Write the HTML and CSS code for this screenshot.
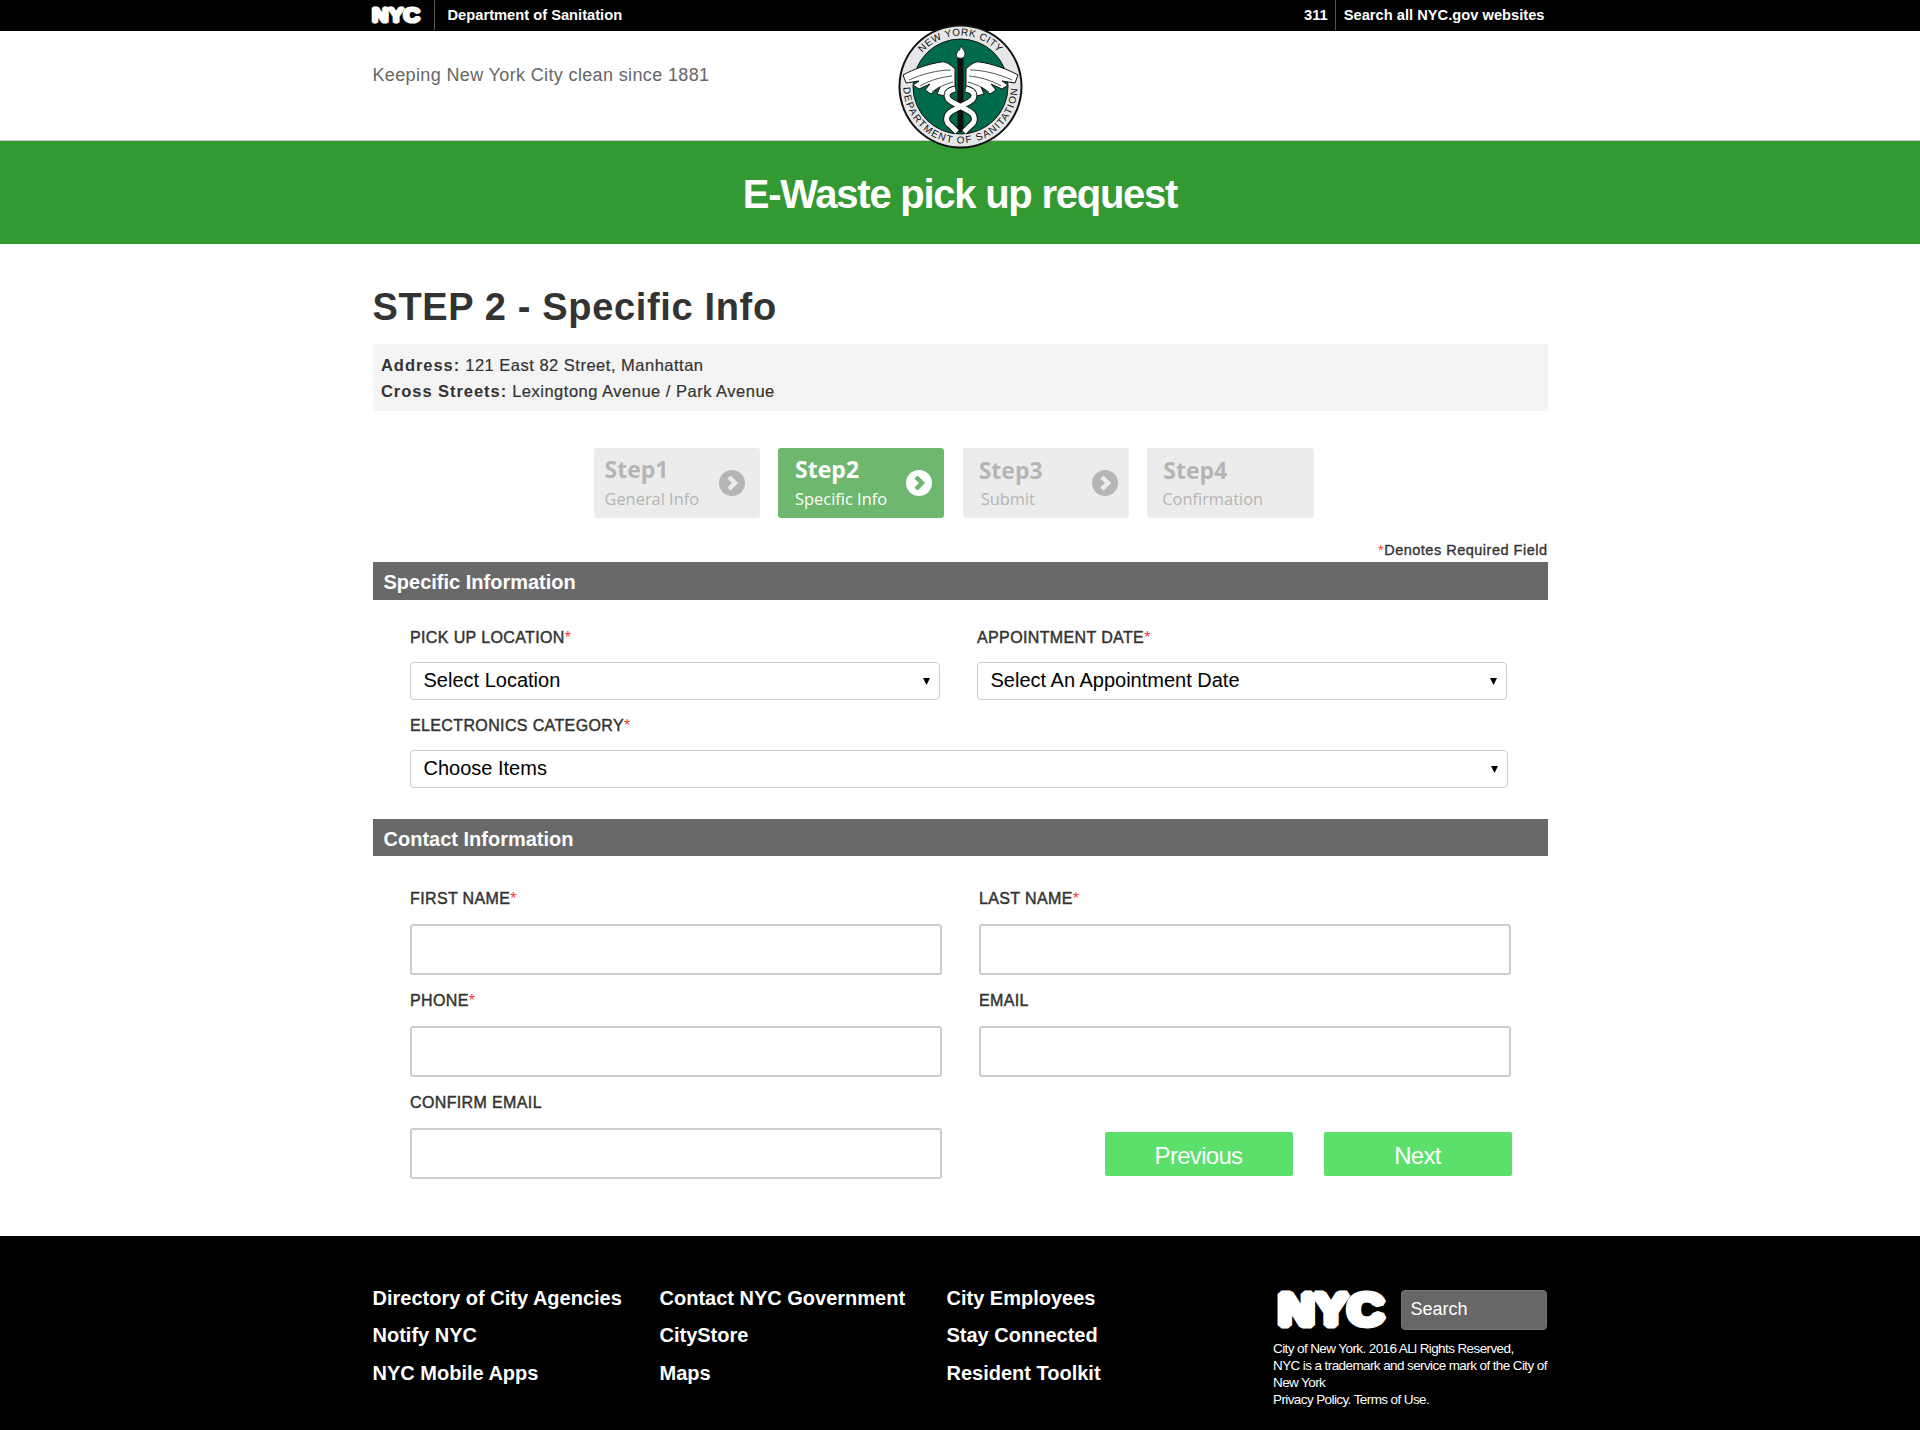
FILE: index.html
```html
<!DOCTYPE html>
<html lang="en">
<head>
<meta charset="utf-8">
<title>E-Waste pick up request</title>
<link rel="stylesheet" href="styles.css">
</head>
<body>
<div class="topbar">
  <div class="wrap topbar-in">
    <svg class="logo-top" viewBox="0 0 52 20" aria-label="NYC"><text x="2" y="17" textLength="48" lengthAdjust="spacingAndGlyphs" class="logo-text">NYC</text></svg>
    <span class="dept">Department of Sanitation</span>
    <span class="t311">311</span>
    <span class="search-all">Search all NYC.gov websites</span>
  </div>
</div>
<header class="head">
  <div class="wrap"><p class="tagline">Keeping New York City clean since 1881</p></div>
  <svg class="seal" viewBox="0 0 125 125" aria-label="New York City Department of Sanitation seal">
    <defs>
      <path id="arcTop" d="M11.500 62.500a51 51 0 0 1 102 0"/>
      <path id="arcBot" d="M5.500 62.500a57 57 0 0 0 114 0"/>
      <g id="wingL">
        <path class="wing-shape" d="M57 45 C52 40 47 37 43 38 C30 40 16 45 5 51 L8 59 L21 57 L15 61 L21 65 L32 60 L27 66 L33 70 L42 63 L39 70 L46 72 L51 66 L57 64Z"/>
        <path class="feather" d="M53 46 C40 46 24 50 11 56M54 52 C44 53 32 56 22 62M55 58 C48 60 40 63 34 68"/>
      </g>
    </defs>
    <circle cx="62.500" cy="62.500" r="62" fill="#111"/>
    <circle cx="62.500" cy="62.500" r="60" fill="#e6e7e8"/>
    <circle cx="62.500" cy="62.500" r="47.500" fill="#006b4a" stroke="#111" stroke-width="1"/>
    <text class="seal-text seal-top"><textPath href="#arcTop" startOffset="50%" text-anchor="middle">NEW YORK CITY</textPath></text>
    <text class="seal-text seal-bot"><textPath href="#arcBot" startOffset="50%" text-anchor="middle">DEPARTMENT OF SANITATION</textPath></text>
    <use href="#wingL"/>
    <use href="#wingL" transform="matrix(-1 0 0 1 125 0)"/>
    <rect x="59.500" y="33" width="6" height="75" fill="#111"/>
    <path class="flame" d="M62.500 22 C66 26 68 29 66.500 32 C66 35 59 35 58.500 32 C57.500 30 60 28 60.500 26 C61.500 27 62 26 62.500 22Z"/>
    <path class="snake-o" d="M57 65 C47 67 47 74 54 78 L71 87 C78 91 78 98 72 102 L66 108 M68 65 C78 67 78 74 71 78 L54 87 C47 91 47 98 53 102 L59 108"/>
    <path class="snake-i" d="M57 65 C47 67 47 74 54 78 L71 87 C78 91 78 98 72 102 L66 108 M68 65 C78 67 78 74 71 78 L54 87 C47 91 47 98 53 102 L59 108"/>
  </svg>
</header>
<div class="banner"><h1 class="banner-title">E-Waste pick up request</h1></div>

<main class="wrap main">
  <h2 class="step-title">STEP 2 - Specific Info</h2>
  <div class="address">
    <div><b>Address:</b> 121 East 82 Street, Manhattan</div>
    <div><b>Cross Streets:</b> Lexingtong Avenue / Park Avenue</div>
  </div>

  <div class="steps">
    <div class="step">
      <div class="step-text"><div class="step-num">Step1</div><div class="step-sub">General Info</div></div>
      <svg class="chev" viewBox="0 0 26 26"><circle cx="13" cy="13" r="13"/><path d="M10 7l6 6-6 6" /></svg>
    </div>
    <div class="step step-on">
      <div class="step-text"><div class="step-num">Step2</div><div class="step-sub">Specific Info</div></div>
      <svg class="chev" viewBox="0 0 26 26"><circle cx="13" cy="13" r="13"/><path d="M10 7l6 6-6 6" /></svg>
    </div>
    <div class="step step-3">
      <div class="step-text step-text-3"><div class="step-num">Step3</div><div class="step-sub step-sub-3">Submit</div></div>
      <svg class="chev" viewBox="0 0 26 26"><circle cx="13" cy="13" r="13"/><path d="M10 7l6 6-6 6" /></svg>
    </div>
    <div class="step">
      <div class="step-text step-text-4"><div class="step-num">Step4</div><div class="step-sub step-sub-4">Confirmation</div></div>
    </div>
  </div>

  <p class="required"><span class="req">*</span>Denotes Required Field</p>

  <h3 class="section">Specific Information</h3>
  <div class="form-a">
    <div class="field">
      <label class="lab">PICK UP LOCATION<span class="req">*</span></label>
      <select class="sel"><option>Select Location</option></select>
    </div>
    <div class="field">
      <label class="lab">APPOINTMENT DATE<span class="req">*</span></label>
      <select class="sel"><option>Select An Appointment Date</option></select>
    </div>
    <div class="field field-wide">
      <label class="lab">ELECTRONICS CATEGORY<span class="req">*</span></label>
      <select class="sel"><option>Choose Items</option></select>
    </div>
  </div>

  <h3 class="section section-2">Contact Information</h3>
  <div class="form-b">
    <div class="field"><label class="lab">FIRST NAME<span class="req">*</span></label><input class="inp" type="text"></div>
    <div class="field"><label class="lab">LAST NAME<span class="req">*</span></label><input class="inp" type="text"></div>
    <div class="field"><label class="lab">PHONE<span class="req">*</span></label><input class="inp" type="text"></div>
    <div class="field"><label class="lab">EMAIL</label><input class="inp" type="text"></div>
    <div class="field"><label class="lab">CONFIRM EMAIL</label><input class="inp" type="text"></div>
    <div class="buttons">
      <button class="btn" type="button">Previous</button>
      <button class="btn" type="button">Next</button>
    </div>
  </div>
</main>

<footer class="foot">
  <div class="wrap foot-in">
    <nav class="foot-links">
      <a>Directory of City Agencies</a><a>Contact NYC Government</a><a>City Employees</a>
      <a>Notify NYC</a><a>CityStore</a><a>Stay Connected</a>
      <a>NYC Mobile Apps</a><a>Maps</a><a>Resident Toolkit</a>
    </nav>
    <div class="foot-right">
      <div class="foot-top">
        <svg class="logo-foot" viewBox="0 0 52 20" aria-label="NYC"><text x="2" y="17" textLength="48" lengthAdjust="spacingAndGlyphs" class="logo-text">NYC</text></svg>
        <div class="foot-search"><span>Search</span></div>
      </div>
      <p class="legal">City of New York. 2016 ALl Rights Reserved,<br>NYC is a trademark and service mark of the City of New York<br>Privacy Policy. Terms of Use.</p>
    </div>
  </div>
</footer>
</body>
</html>
```
FILE: styles.css
```css
* { box-sizing: border-box; }
html, body { margin: 0; padding: 0; }
body { font-family: "Liberation Sans", Arial, sans-serif; color: #333; background: #fff; }
.wrap { width: 1175px; margin: 0 auto; }

.topbar { background: #000; height: 31px; color: #fff; }
.topbar-in { display: flex; align-items: stretch; height: 30px; font-weight: 700; font-size: 14.700px; line-height: 30px; }
.logo-top { width: 52px; height: 20px; margin: 5px 0 0 -3px; overflow: visible; }
.logo-text { font-family: "Liberation Sans", sans-serif; font-weight: 700; font-size: 20px; fill: #fff; stroke: #fff; stroke-width: 3.200px; stroke-linejoin: bevel; }
.dept { margin-left: 12px; border-left: 1px solid #555; padding-left: 13px; }
.t311 { margin-left: auto; padding-right: 7px; }
.search-all { border-left: 1px solid #555; padding-left: 8px; padding-right: 3px; }

.head { height: 110px; border-bottom: 1px solid #ccc; position: relative; }
.tagline { margin: 0; padding-top: 33px; font-size: 18px; line-height: 22px; color: #666; letter-spacing: .36px; }
.seal { position: absolute; left: 898px; top: -7px; width: 125px; height: 125px; z-index: 2; }
.seal-text { font-family: "Liberation Sans", sans-serif; font-size: 10px; fill: #111; }
.seal-top { letter-spacing: .5px; }
.seal-bot { letter-spacing: 1.300px; }
.wing-shape { fill: #fff; stroke: #111; stroke-width: 1; }
.feather { fill: none; stroke: #111; stroke-width: .7; }
.flame { fill: #fff; stroke: #111; stroke-width: .8; }
.snake-o { fill: none; stroke: #111; stroke-width: 7; }
.snake-i { fill: none; stroke: #fff; stroke-width: 5; }

.banner { background: #339933; height: 103px; display: flex; align-items: center; justify-content: center; padding-top: 4px; }
.banner-title { margin: 0; color: #fff; font-size: 40px; font-weight: 700; letter-spacing: -1.250px; }

.main { display: block; }
.step-title { margin: 0; padding-top: 40px; font-size: 38px; line-height: 46px; font-weight: 700; color: #333; letter-spacing: .65px; }
.address { margin-top: 14px; background: #f4f4f4; height: 67px; padding: 8px 8.500px; font-size: 16.500px; line-height: 26px; letter-spacing: .5px; -webkit-text-stroke: .2px #333; }
.address b { letter-spacing: .95px; -webkit-text-stroke: 0; }
.steps { display: flex; gap: 18.300px; margin: 37px 0 0 221px; }
.step { width: 166.300px; height: 70px; background: #ececec; border-radius: 3px; display: flex; align-items: center; justify-content: space-between; padding: 0 15px 0 11px; color: #b5b5b5; font-family: "Open Sans", sans-serif; }
.step-on { background: #6eb76e; color: #fff; padding: 0 12px 0 17px; }
.step-3 { padding-right: 11px; }
.step-text { position: relative; top: -1px; }
.step-num { font-size: 23px; line-height: 30px; font-weight: 700; }
.step-sub { font-size: 16.400px; line-height: 22px; margin-top: 4px; }
.step-text-3 { padding-left: 5px; }
.step-text-4 { padding-left: 5px; }
.step-sub-3 { padding-left: 2px; margin-top: 3px; }
.step-sub-4 { margin-top: 3px; margin-left: -1px; }
.chev { width: 26px; height: 26px; flex: none; }
.chev circle { fill: #b5b5b5; }
.chev path { fill: none; stroke: #ececec; stroke-width: 4.500; }
.step-on .chev circle { fill: #fff; }
.step-on .chev path { stroke: #6eb76e; }

.required { margin: 24px 0 0; text-align: right; font-size: 14.500px; line-height: 16px; font-weight: 400; color: #333; -webkit-text-stroke: .35px #333; letter-spacing: .5px; }
.req { color: #f33; font-weight: 400; -webkit-text-stroke: 0; }
.section { margin: 4px 0 0; background: #696969; color: #fff; height: 38px; padding-left: 11px; font-size: 20px; line-height: 40px; font-weight: 700; }
.section-2 { margin-top: 31px; height: 37px; line-height: 40px; }
.form-a { display: grid; grid-template-columns: 530px 530px; column-gap: 37px; padding: 27px 0 0 37px; }
.field { display: flex; flex-direction: column; }
.field-wide { grid-column: 1 / 3; margin-right: -1px; }
.lab { font-size: 16px; line-height: 18px; color: #333; font-weight: 400; -webkit-text-stroke: .45px #333; height: 35px; letter-spacing: .37px; padding: 2px 0 0 .5px; }
.sel { height: 38px; font-family: "Liberation Sans", sans-serif; font-size: 20px; color: #000; border: 1px solid #ccc; border-radius: 4px; padding: 0 13px 3px; margin-bottom: 15px; appearance: none; background: #fff url("data:image/svg+xml,%3Csvg xmlns='http://www.w3.org/2000/svg' width='7' height='7'%3E%3Cpath d='M0 0h7L3.500 7z'/%3E%3C/svg%3E") no-repeat right 9px center; }
.form-a .field-wide .sel { margin-bottom: 0; }

.form-b { display: grid; grid-template-columns: 532px 532px; column-gap: 37px; row-gap: 16px; padding: 33px 0 0 37px; }
.form-b .lab { height: 35px; padding-top: 1px; }
.inp { height: 51px; background: #fff; border: 2px solid #ccc; border-radius: 3px; }
.buttons { display: flex; gap: 31px; justify-content: flex-end; align-items: flex-end; margin-right: -1px; padding-bottom: 3px; }
.btn { width: 188px; height: 44px; background: #5ce06c; color: #fff; border: 0; border-radius: 2px; font-family: "Liberation Sans", sans-serif; font-size: 24px; letter-spacing: -.7px; padding: 3px 0 0; }

.foot { margin-top: 57px; background: #000; color: #fff; height: 195px; }
.foot-in { display: flex; padding-top: 46px; }
.foot-links { width: 900px; display: grid; grid-template-columns: 287px 287px 287px; grid-auto-rows: 37.400px; font-size: 20px; font-weight: 700; line-height: 32px; align-content: start; }
.foot-right { width: 275px; padding-top: 8px; }
.foot-top { display: flex; align-items: flex-start; gap: 8px; }
.logo-foot { width: 124px; height: 44px; margin: -2px 0 0 -4px; flex: none; overflow: visible; }
.foot-search { width: 146px; height: 40px; background: #666; border: 1px solid #777; border-radius: 4px; padding-left: 9px; font-size: 18px; line-height: 36px; }
.legal { margin: 8px 0 0 .5px; font-size: 13.500px; line-height: 17px; letter-spacing: -.6px; }
```
